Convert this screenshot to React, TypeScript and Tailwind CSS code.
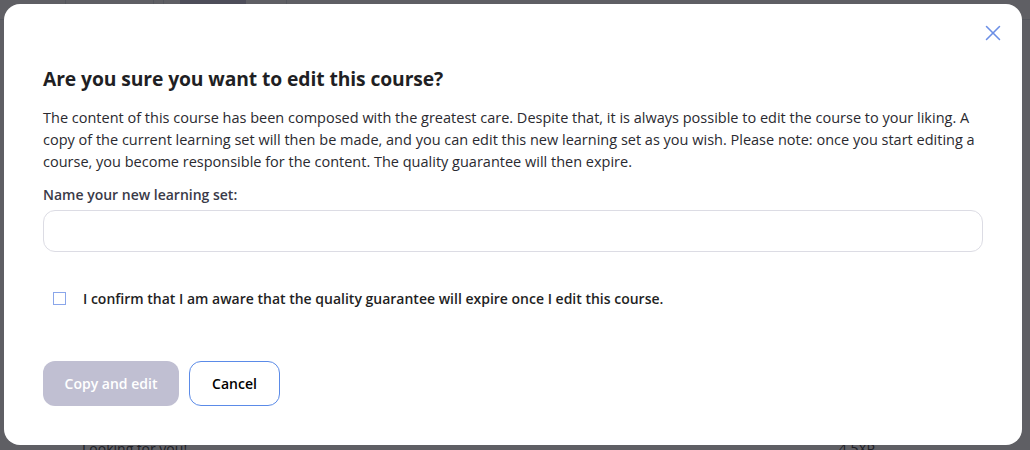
import { X } from 'lucide-react';

export default function App() {
  return (
    <div
      className="relative h-[450px] w-[1030px] overflow-hidden bg-[#f4f4f6]"
      style={{ fontFamily: '"Open Sans", "Liberation Sans", sans-serif' }}
    >
      {/* Page behind the dialog */}
      <div className="flex h-[20px] border-b border-gray-300">
        <div className="w-[66px] border-r border-gray-300" />
        <div className="w-[88px] border-r border-gray-300" />
        <div className="w-[10px] border-r border-gray-300" />
        <div className="ml-[16px] w-[66px] rounded-b-md bg-[#b8b8d0]" />
        <div className="ml-[40px] w-[0px] border-r border-gray-300" />
      </div>
      <div className="mt-[418px] flex justify-between pl-[82px] pr-[155px] text-[14px] text-[#222]">
        <span>Looking for you!</span>
        <span>4.5XP</span>
      </div>

      {/* Overlay */}
      <div className="absolute inset-0 bg-[#202026]/70 p-1">
        <div className="relative h-[441px] w-[1018px] rounded-2xl bg-white pl-[39px] pr-[39px] pt-[62px]">
          <button className="absolute right-[16px] top-[16px] text-[#6b8ee6]">
            <X className="h-[26px] w-[26px]" strokeWidth={1.4} />
          </button>

          <h2 className="text-[19.3px] font-bold leading-[26px] tracking-[-0.1px] text-[#1f1f24]">
            Are you sure you want to edit this course?
          </h2>

          <p className="mt-[15px] whitespace-nowrap text-[14.5px] leading-[22px] text-[#2a2a30]">
            The content of this course has been composed with the greatest care. Despite that, it is always possible to edit the course to your liking. A
            <br />
            copy of the current learning set will then be made, and you can edit this new learning set as you wish. Please note: once you start editing a
            <br />
            course, you become responsible for the content. The quality guarantee will then expire.
          </p>

          <label className="mt-[11px] block text-[14px] font-semibold leading-[22px] text-[#3a3a48]">
            Name your new learning set:
          </label>
          <input
            type="text"
            className="mt-[4px] h-[42px] w-[940px] rounded-xl border border-[#dcdce4] px-4 outline-none"
          />

          <label className="mt-[36px] flex items-center gap-[17px] pl-[10px]">
            <span className="h-[13px] w-[13px] border border-[#8aa6ea]" />
            <span className="text-[14px] font-semibold text-[#1f1f24]">
              I confirm that I am aware that the quality guarantee will expire once I edit this course.
            </span>
          </label>

          <div className="mt-[52px] flex gap-[10px]">
            <button className="h-[45px] w-[136px] rounded-xl bg-[#c0bfd2] text-[14px] font-semibold text-white">
              Copy and edit
            </button>
            <button className="h-[45px] w-[91px] rounded-xl border border-[#5b8be8] text-[14px] font-semibold text-black">
              Cancel
            </button>
          </div>
        </div>
      </div>
    </div>
  );
}
